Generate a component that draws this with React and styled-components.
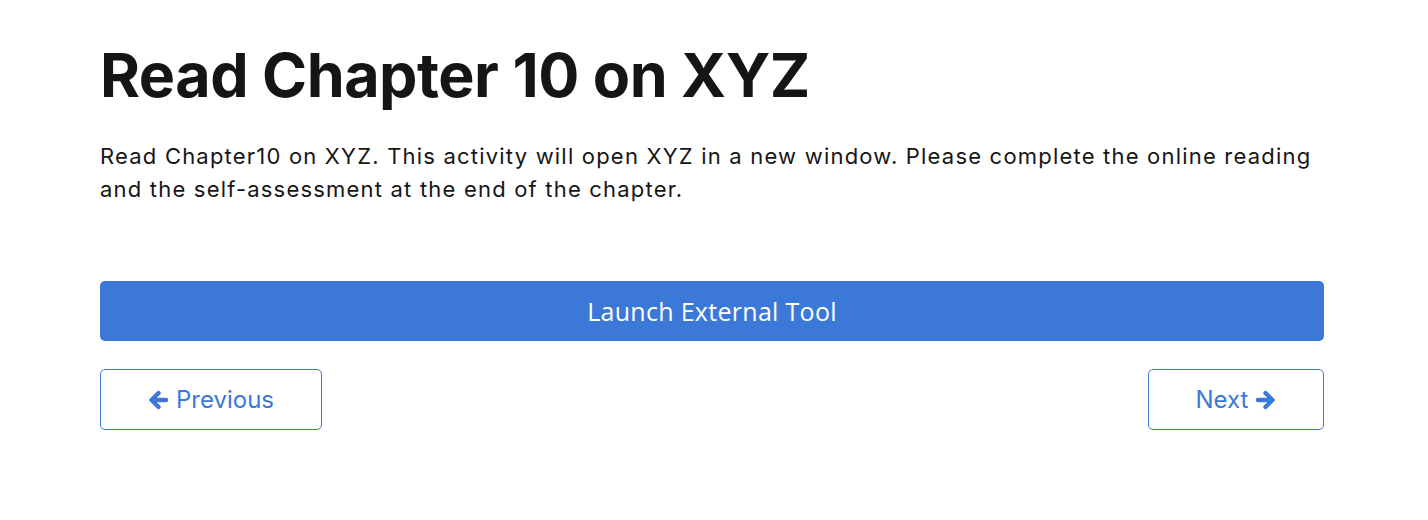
import React from 'react';
import styled, { createGlobalStyle } from 'styled-components';

const GlobalStyle = createGlobalStyle`
  body {
    margin: 0;
    background: #fff;
    font-family: Inter, "Noto Sans", sans-serif;
    color: #161616;
  }
`;

const Page = styled.div`
  width: 1224px;
  padding: 37px 104px 0 100px;
`;

const Title = styled.h1`
  margin: 0;
  font-family: Inter, sans-serif;
  font-weight: 700;
  font-size: 61px;
  line-height: 76px;
  letter-spacing: -0.5px;
  color: #151515;
`;

const Lead = styled.p`
  margin: 27px 0 0;
  font-size: 22px;
  line-height: 33px;
  letter-spacing: 1.2px;
  color: #161616;
`;

const Launch = styled.button`
  display: block;
  width: 100%;
  height: 60px;
  margin-top: 75px;
  border: none;
  border-radius: 5px;
  background: #3b78d8;
  color: #fff;
  font-family: "Open Sans", sans-serif;
  font-weight: 500;
  font-size: 25px;
  letter-spacing: 0.3px;
  cursor: pointer;
`;

const NavRow = styled.div`
  display: flex;
  justify-content: space-between;
  margin-top: 28px;
`;

const NavButton = styled.button`
  display: flex;
  align-items: center;
  justify-content: center;
  gap: 7px;
  width: ${p => p.$w}px;
  height: 61px;
  border: 1px solid #3b78d8;
  border-radius: 5px;
  background: #fff;
  color: #3b78d8;
  font-family: Inter, sans-serif;
  font-size: 24px;
  cursor: pointer;
`;

const Arrow = ({ dir }) => (
  <svg width="21" height="20" viewBox="0 0 21 20" fill="none" stroke="currentColor"
    strokeWidth="4.4" strokeLinecap="round" strokeLinejoin="round"
    style={{ transform: dir === 'right' ? 'scaleX(-1)' : 'none' }}>
    <path d="M10.5 3 L3.5 10 L10.5 17 M4 10 H18" />
  </svg>
);

export default function App() {
  return (
    <Page>
      <GlobalStyle />
      <Title>Read Chapter 10 on XYZ</Title>
      <Lead>
        Read Chapter10 on XYZ. This activity will open XYZ in a new window. Please complete the online reading
        and the self-assessment at the end of the chapter.
      </Lead>
      <Launch>Launch External Tool</Launch>
      <NavRow>
        <NavButton $w={222}><Arrow dir="left" />Previous</NavButton>
        <NavButton $w={176}>Next<Arrow dir="right" /></NavButton>
      </NavRow>
    </Page>
  );
}
